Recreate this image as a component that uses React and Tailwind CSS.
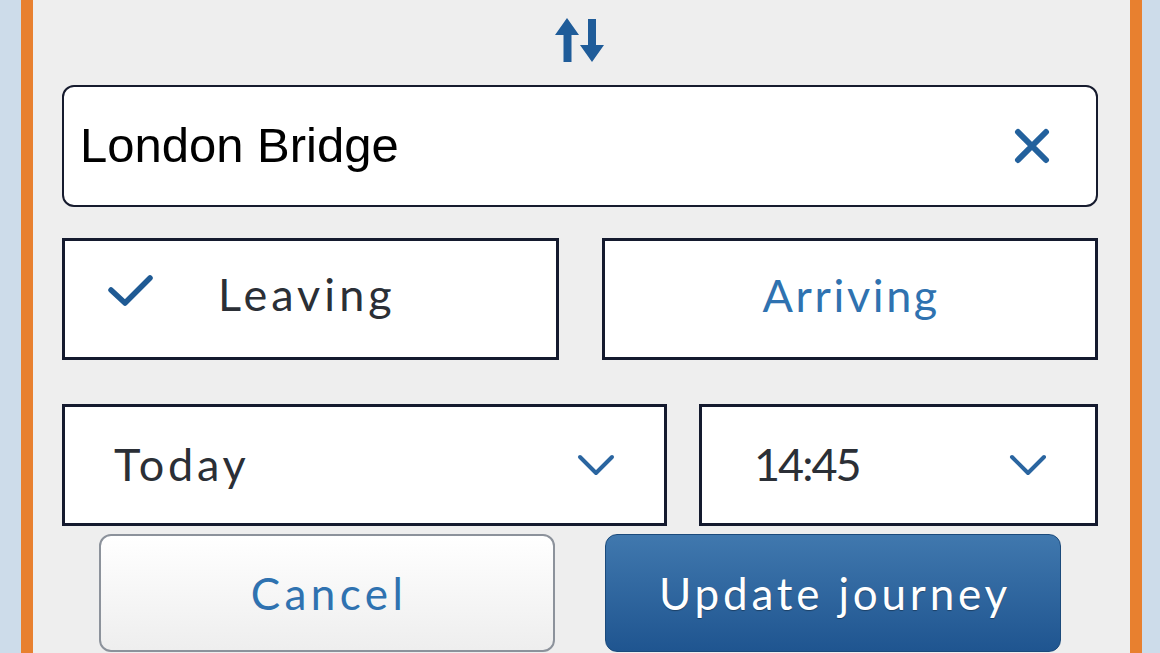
import React from 'react';

const lato = { fontFamily: 'Lato, "Open Sans", sans-serif' };

function Chevron() {
  return (
    <svg width="38" height="24" viewBox="0 0 38 24" className="shrink-0">
      <polyline points="3,4 19,20 35,4" fill="none" stroke="#2a65a0" strokeWidth="4" strokeLinecap="round" strokeLinejoin="round" />
    </svg>
  );
}

export default function App() {
  return (
    <div className="h-[653px] w-[1160px] overflow-hidden bg-[#cddcea] pl-[21px] pr-[18px]">
      <div className="h-full border-x-[12px] border-[#e8802f] bg-[#eeeeee] pl-[29px] pr-[32px] pt-[18px]" style={lato}>
        {/* swap */}
        <div className="flex justify-center">
          <svg width="50" height="45" viewBox="0 0 50 45">
            <path d="M12 0 L24 17 L16.5 17 L16.5 44 L8.5 44 L8.5 17 L0 17 Z" fill="#1f5c99" />
            <path d="M33 1 L41 1 L41 27 L49 27 L37 44 L25 27 L33 27 Z" fill="#1f5c99" />
          </svg>
        </div>

        {/* station */}
        <div className="mt-[22px] flex h-[122px] items-center justify-between rounded-[12px] border-[2.5px] border-[#161b2e] bg-white pl-[16px] pr-[46px]">
          <span className="text-[49px] text-black" style={{ fontFamily: '"Liberation Sans", Arial, sans-serif' }}>London Bridge</span>
          <svg width="36" height="36" viewBox="0 0 36 36">
            <path d="M4 4 L32 32 M32 4 L4 32" stroke="#23619d" strokeWidth="6" strokeLinecap="round" />
          </svg>
        </div>

        {/* leaving / arriving */}
        <div className="mt-[31px] grid grid-cols-2 gap-[43px]">
          <div className="flex h-[122px] items-center border-[3px] border-[#141a2e] bg-white pb-[8px] pl-[43px]">
            <svg width="46" height="34" viewBox="0 0 46 34" className="mb-[10px] shrink-0">
              <polyline points="3,17 17,30 42,5" fill="none" stroke="#1f5a94" strokeWidth="5.5" strokeLinecap="round" strokeLinejoin="round" />
            </svg>
            <span className="ml-[64px] text-[45px] tracking-[4px] text-[#2b2f36]">Leaving</span>
          </div>
          <div className="flex h-[122px] items-center justify-center border-[3px] border-[#141a2e] bg-white pb-[6px] pl-[3px]">
            <span className="text-[45px] tracking-[2.6px] text-[#2f72b0]">Arriving</span>
          </div>
        </div>

        {/* date / time */}
        <div className="mt-[44px] grid grid-cols-[605px_1fr] gap-[32px]">
          <div className="flex h-[122px] items-center justify-between border-[3px] border-[#141a2e] bg-white pl-[49px] pr-[49px]">
            <span className="text-[45px] tracking-[3.7px] text-[#2b2f36]">Today</span>
            <Chevron />
          </div>
          <div className="flex h-[122px] items-center justify-between border-[3px] border-[#141a2e] bg-white pl-[52px] pr-[48px]">
            <span className="text-[45px] tracking-[-2px] text-[#2b2f36]">14:45</span>
            <Chevron />
          </div>
        </div>

        {/* actions */}
        <div className="mt-[8px] grid grid-cols-2 gap-[50px] px-[37px]">
          <button className="flex h-[118px] items-center justify-center rounded-[12px] border-2 border-[#8c929b] bg-gradient-to-b from-white to-[#eeeeee] pl-[4px] text-[44px] tracking-[4.4px] text-[#2f72b0]">
            Cancel
          </button>
          <button className="flex h-[118px] items-center justify-center rounded-[12px] border border-[#1b4a7b] bg-gradient-to-b from-[#4078ae] to-[#1f5590] pl-[4px] text-[44px] tracking-[3.8px] text-white [text-shadow:0_1px_1px_rgba(0,0,0,0.35)]">
            Update journey
          </button>
        </div>
      </div>
    </div>
  );
}
